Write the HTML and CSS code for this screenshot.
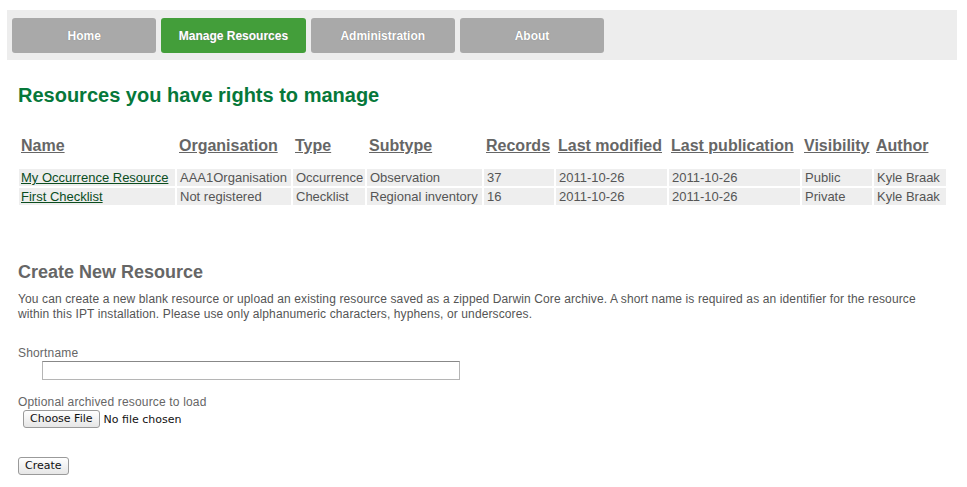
FILE: index.html
```html
<!DOCTYPE html>
<html>
<head>
<meta charset="utf-8">
<link rel="stylesheet" href="styles.css">
</head>
<body>
<nav class="menu">
  <a class="tab" href="#">Home</a>
  <a class="tab current" href="#">Manage Resources</a>
  <a class="tab" href="#">Administration</a>
  <a class="tab" href="#">About</a>
</nav>
<main class="content">
  <h1 class="title">Resources you have rights to manage</h1>
  <table class="resources">
    <colgroup>
      <col style="width:156px"><col style="width:114px"><col style="width:72px"><col style="width:115px"><col style="width:70px"><col style="width:111px"><col style="width:131px"><col style="width:70px"><col style="width:72px">
    </colgroup>
    <thead>
      <tr>
        <th><a href="#">Name</a></th>
        <th><a href="#">Organisation</a></th>
        <th><a href="#">Type</a></th>
        <th><a href="#">Subtype</a></th>
        <th><a href="#">Records</a></th>
        <th><a href="#">Last modified</a></th>
        <th><a href="#">Last publication</a></th>
        <th><a href="#">Visibility</a></th>
        <th><a href="#">Author</a></th>
      </tr>
    </thead>
    <tbody>
      <tr>
        <td><a href="#">My Occurrence Resource</a></td>
        <td>AAA1Organisation</td>
        <td>Occurrence</td>
        <td>Observation</td>
        <td>37</td>
        <td>2011-10-26</td>
        <td>2011-10-26</td>
        <td>Public</td>
        <td>Kyle Braak</td>
      </tr>
      <tr>
        <td><a href="#">First Checklist</a></td>
        <td>Not registered</td>
        <td>Checklist</td>
        <td>Regional inventory</td>
        <td>16</td>
        <td>2011-10-26</td>
        <td>2011-10-26</td>
        <td>Private</td>
        <td>Kyle Braak</td>
      </tr>
    </tbody>
  </table>

  <h2 class="subtitle">Create New Resource</h2>
  <p class="intro">You can create a new blank resource or upload an existing resource saved as a zipped Darwin Core archive. A short name is required as an identifier for the resource within this IPT installation. Please use only alphanumeric characters, hyphens, or underscores.</p>

  <form class="create-form">
    <div class="field">
      <label class="label" for="shortname">Shortname</label>
      <input class="text-input" id="shortname" type="text">
    </div>
    <div class="field">
      <label class="label">Optional archived resource to load</label>
      <div class="file-row">
        <span class="btn">Choose File</span>
        <span class="file-status">No file chosen</span>
      </div>
    </div>
    <div class="submit-row">
      <span class="btn">Create</span>
    </div>
  </form>
</main>
</body>
</html>
```

FILE: styles.css
```css
* { box-sizing: border-box; }
body {
  margin: 10px 10px 0 7px;
  font-family: "Liberation Sans", Arial, sans-serif;
  color: #666;
  background: #fff;
}
.menu {
  display: flex;
  gap: 5px;
  background: #ededed;
  height: 50px;
  padding: 8px 5px 0 5px;
}
.tab {
  display: flex;
  align-items: center;
  justify-content: center;
  width: 144.3px;
  height: 35px;
  background: #a9a9a9;
  border-radius: 3px;
  color: #fff;
  font-weight: bold;
  font-size: 12px;
  text-decoration: none;
  text-shadow: 0 0 1px #777;
}
.tab.current { background: #439e3a; }

.content { padding: 0 10px 0 10px; }
.title {
  margin: 23px 0 0 1px;
  font-size: 20px;
  line-height: 24px;
  color: #06783a;
  font-weight: bold;
}
.resources {
  margin: 27px 0 0 0;
  border-spacing: 2px;
  table-layout: fixed;
  width: 931px;
  font-size: 13px;
}
.resources th {
  text-align: left;
  font-size: 16px;
  padding: 0 2px 11px 2px;
  line-height: 20px;
  white-space: nowrap;
}
.resources th a { color: #666; }
.resources td {
  background: #eeeeee;
  padding: 1px 2px 1px 2px;
  line-height: 15px;
  color: #555;
  white-space: nowrap;
}
.resources td:not(:first-child) { padding-left: 3px; }
.resources td a { color: #0b4d1e; }

.subtitle {
  margin: 54px 0 0 1px;
  font-size: 18px;
  line-height: 22px;
  color: #666;
}
.intro {
  margin: 9px 0 0 1px;
  font-size: 12px;
  line-height: 15px;
  letter-spacing: 0.12px;
  color: #555;
}
.create-form { margin-top: 24px; }
.field { display: flex; flex-direction: column; align-items: flex-start; margin-bottom: 15px; }
.label {
  font-size: 12px;
  line-height: 15px;
  letter-spacing: 0.17px;
  color: #666;
  margin-left: 1px;
}
.text-input {
  margin: 0 0 0 25px;
  width: 418px;
  height: 19px;
  border: 1px solid #b5b5b5;
  border-top-color: #888;
  background: #fff;
}
.file-row { display: flex; align-items: center; gap: 4px; margin: 0 0 0 6px; }
.btn {
  display: inline-block;
  font-family: "Lucida Grande", "DejaVu Sans", sans-serif;
  font-size: 11px;
  line-height: 16px;
  height: 18px;
  padding: 0 6px;
  border: 1px solid #9a9a9a;
  border-radius: 3px;
  background: linear-gradient(#ffffff, #e6e6e6);
  color: #111;
}
.file-status {
  font-family: "Lucida Grande", "DejaVu Sans", sans-serif;
  font-size: 11px;
  color: #111;
}
.submit-row { margin: 27px 0 0 1px; }
```
